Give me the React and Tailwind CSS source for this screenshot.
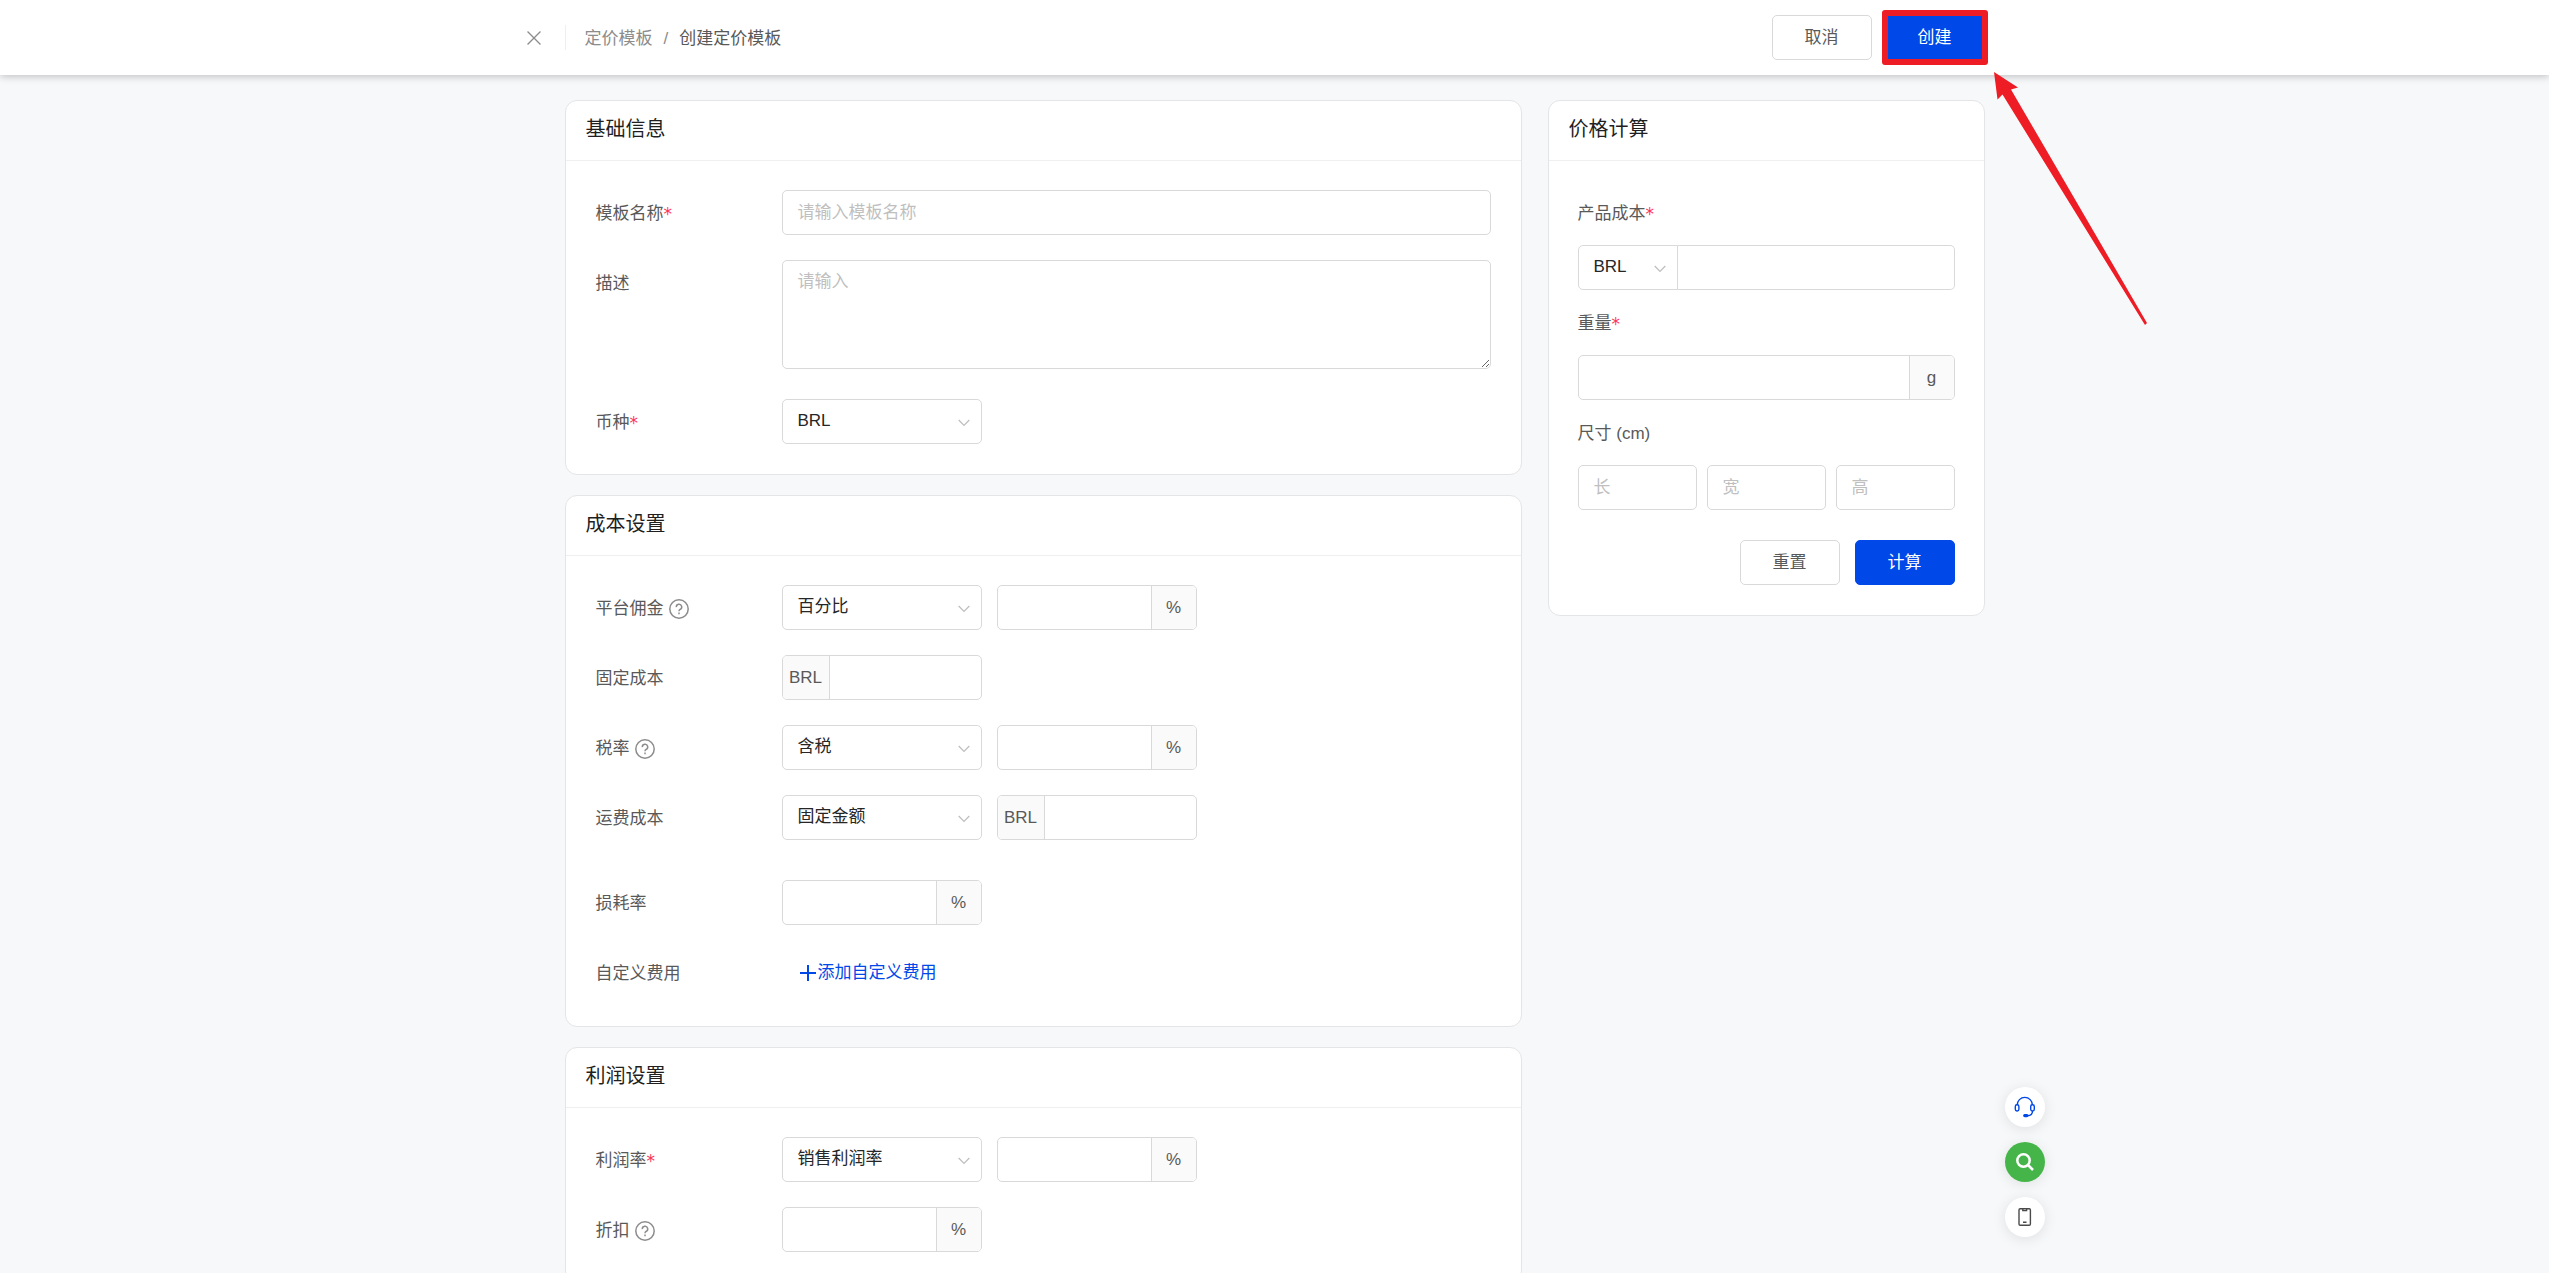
import { useState } from "react";

const inputClass =
  "h-[45px] min-w-0 rounded-[5px] border border-[#d9d9d9] bg-white px-[15px] text-[#262626] outline-none placeholder:text-[#bfbfbf]";

const labelClass = "flex h-[45px] items-center pt-0.5 text-[#595959]";

function Card({ title, children }) {
  return (
    <section className="rounded-[12px] border border-[#e4e5e7] bg-white">
      <h2 className="h-[60px] border-b border-[#efefef] px-5 pt-3 text-[20px] leading-8 text-[#1f1f1f]">{title}</h2>
      {children}
    </section>
  );
}

function Required() {
  return <span className="text-[#ff3358] font-['DejaVu_Sans','Noto_Sans_CJK_SC',sans-serif]">*</span>;
}

function HelpIcon() {
  return (
    <svg className="ml-[5px] size-5" viewBox="0 0 20 20" fill="none" stroke="#8c8c8c" strokeWidth="1.5" aria-hidden="true">
      <circle cx="10" cy="10" r="9.2" />
      <path d="M7.300 8.100a2.700 2.700 0 1 1 3.700 2.400c-.7.300-1 .700-1 1.700" />
      <path d="M10 13.600v1.700" />
    </svg>
  );
}

function Row({ label, htmlFor, required, help, children }) {
  return (
    <div className="flex items-start">
      <label htmlFor={htmlFor} className={`${labelClass} w-[186px] shrink-0`}>
        {label}
        {required && <Required />}
        {help && <HelpIcon />}
      </label>
      <div className="flex min-w-0 flex-1 gap-[15px]">{children}</div>
    </div>
  );
}

function Select({ id, label, options, className = "w-[200px] rounded-[5px]" }) {
  return (
    <div className="relative shrink-0">
      <select
        id={id}
        aria-label={label}
        className={`h-[45px] appearance-none border border-[#d9d9d9] bg-white pr-8 pb-px pl-[15px] text-[#262626] outline-none ${className}`}
      >
        {options.map((option) => (
          <option key={option}>{option}</option>
        ))}
      </select>
      <svg
        className="pointer-events-none absolute top-5 right-3 h-2 w-3"
        viewBox="0 0 12 8"
        fill="none"
        stroke="#bfbfbf"
        strokeWidth="1.3"
        aria-hidden="true"
      >
        <path d="M.7 1 6 6.4 11.3 1" />
      </svg>
    </div>
  );
}

// number box with a unit before or after it
function UnitInput({ id, label, prefix, suffix, className = "w-[200px]" }) {
  return (
    <div className={`flex h-[45px] overflow-hidden rounded-[5px] border border-[#d9d9d9] bg-white ${className}`}>
      {prefix && (
        <span className="flex w-[47px] shrink-0 items-center justify-center border-r border-[#d9d9d9] bg-[#fafafa] text-[#595959]">
          {prefix}
        </span>
      )}
      <input id={id} aria-label={label} className="min-w-0 flex-1 px-[15px] outline-none" />
      {suffix && (
        <span className="flex w-[45px] shrink-0 items-center justify-center border-l border-[#d9d9d9] bg-[#fafafa] text-[#595959]">
          {suffix}
        </span>
      )}
    </div>
  );
}

function Button({ primary, children, onClick }) {
  return (
    <button
      type="button"
      onClick={onClick}
      className={`h-[45px] w-[100px] rounded-[5px] border ${
        primary ? "border-[#0048e8] bg-[#0048e8] text-white" : "border-[#d9d9d9] bg-white text-[#595959]"
      }`}
    >
      {children}
    </button>
  );
}

function Header() {
  return (
    <header className="relative z-10 h-[75px] shrink-0 bg-white shadow-[0_1px_8px_rgba(0,0,0,0.25)]">
      <div className="relative mx-auto flex h-full max-w-[1420px] items-center">
        <button type="button" aria-label="关闭" className="absolute right-full mr-6">
          <svg className="size-[14px]" viewBox="0 0 13 13" stroke="#8c8c8c" strokeWidth="1.2" aria-hidden="true">
            <path d="M.5.5l12 12M12.5.5l-12 12" />
          </svg>
        </button>
        <nav className="flex h-[25px] items-center gap-[11px] border-l border-[#efefef] pt-0.5 pl-[19px] text-[#8c8c8c]">
          <a href="#templates">定价模板</a>
          <span>/</span>
          <span className="text-[#595959]">创建定价模板</span>
        </nav>
        <div className="ml-auto flex gap-[13px]">
          <Button>取消</Button>
          <div className="relative">
            <Button primary>创建</Button>
            <div className="pointer-events-none absolute -inset-x-[3px] -inset-y-[5px] rounded-[3px] border-6 border-[#ee1c25]" />
            <svg
              className="pointer-events-none absolute top-[57px] left-full ml-[9px] h-[254px] w-[154px]"
              viewBox="0 0 154 254"
              fill="#ee1c25"
              aria-hidden="true"
            >
              <path d="M0 0 24 15.5 17 17.5 153 251 151 253 8.5 22.5 3.5 27.500Z" />
            </svg>
          </div>
        </div>
      </div>
    </header>
  );
}

function PriceCalculator() {
  const [size, setSize] = useState({ 长: "", 宽: "", 高: "" });

  return (
    <Card title="价格计算">
      <div className="flex flex-col gap-[10px] px-[29px] pt-[29px] pb-[30px]">
        <label htmlFor="product-cost" className={labelClass}>
          产品成本
          <Required />
        </label>
        <div className="flex">
          <Select label="成本币种" options={["BRL", "USD", "CNY"]} className="w-[100px] rounded-l-[5px]" />
          <input id="product-cost" className={`${inputClass} flex-1 rounded-l-none border-l-0`} />
        </div>
        <label htmlFor="weight" className={labelClass}>
          重量
          <Required />
        </label>
        <UnitInput id="weight" suffix="g" className="w-full" />
        <label htmlFor="size-长" className={labelClass}>
          尺寸 (cm)
        </label>
        <div className="grid grid-cols-3 gap-[10px]">
          {Object.keys(size).map((side) => (
            <input
              key={side}
              id={`size-${side}`}
              aria-label={side}
              placeholder={side}
              value={size[side]}
              onChange={(e) => setSize({ ...size, [side]: e.target.value })}
              className={inputClass}
            />
          ))}
        </div>
        <div className="mt-5 flex justify-end gap-[15px]">
          <Button onClick={() => setSize({ 长: "", 宽: "", 高: "" })}>重置</Button>
          <Button primary>计算</Button>
        </div>
      </div>
    </Card>
  );
}

function FloatingTools() {
  const round = "flex size-10 items-center justify-center rounded-full shadow-[0_2px_14px_rgba(0,0,0,0.1)]";
  return (
    <div className="pointer-events-none fixed inset-x-0 bottom-9 z-10 mx-auto max-w-[1420px]">
      <div className="pointer-events-auto absolute bottom-0 left-full ml-5 flex flex-col gap-[15px]">
        <button type="button" aria-label="客服" className={`${round} bg-white`}>
          <svg className="size-6" viewBox="0 0 24 24" fill="none" stroke="#0048e8" strokeWidth="1.4" aria-hidden="true">
            <path d="M4.200 10a7.600 7.600 0 0 1 15.200 0" />
            <rect x="2.300" y="9.800" width="3.600" height="6.200" rx="1.700" />
            <rect x="17.700" y="9.800" width="3.600" height="6.200" rx="1.700" />
            <path d="M19.500 16c0 3-2 4.600-5 4.700" />
            <rect x="10.800" y="19.600" width="4" height="2" rx="1" fill="#0048e8" />
          </svg>
        </button>
        <button type="button" aria-label="搜索" className={`${round} bg-[#45b549]`}>
          <svg className="size-5" viewBox="0 0 20 20" fill="none" stroke="#fff" strokeWidth="2.500" aria-hidden="true">
            <circle cx="8.500" cy="8.500" r="6.200" />
            <path d="M13 13l5 5" />
          </svg>
        </button>
        <button type="button" aria-label="手机版" className={`${round} bg-white`}>
          <svg className="size-5" viewBox="0 0 20 20" fill="none" stroke="#4a4a4a" strokeWidth="1.400" aria-hidden="true">
            <rect x="4" y="1.700" width="11.400" height="16.600" rx="1.200" />
            <path d="M7.800 2v1.600h3.800V2M8 15.300h3.500" />
          </svg>
        </button>
      </div>
    </div>
  );
}

export default function App() {
  return (
    <div className="flex h-screen flex-col overflow-hidden bg-[#f7f8fa] font-['Liberation_Sans','Noto_Sans_CJK_SC',sans-serif] text-[17px] leading-6">
      <Header />
      <main className="flex-1 overflow-y-auto [scrollbar-width:none]">
        <div className="mx-auto flex max-w-[1420px] items-start gap-[26px] pt-[25px]">
          <div className="flex min-w-0 flex-1 flex-col gap-5">
            <Card title="基础信息">
              <div className="flex flex-col gap-[25px] px-[30px] pt-[29px] pb-[30px]">
                <Row label="模板名称" htmlFor="name" required>
                  <input id="name" placeholder="请输入模板名称" className={`${inputClass} w-full`} />
                </Row>
                <Row label="描述" htmlFor="description">
                  <textarea
                    id="description"
                    placeholder="请输入"
                    className="h-[109px] w-full resize rounded-[5px] border border-[#d9d9d9] bg-white px-[15px] py-[9px] outline-none placeholder:text-[#bfbfbf]"
                  />
                </Row>
                <div className="pt-[5px]">
                  <Row label="币种" htmlFor="currency" required>
                    <Select id="currency" options={["BRL", "USD", "CNY"]} />
                  </Row>
                </div>
              </div>
            </Card>

            <Card title="成本设置">
              <div className="flex flex-col gap-[25px] px-[30px] pt-[29px] pb-[30px]">
                <Row label="平台佣金" htmlFor="commission-type" help>
                  <Select id="commission-type" options={["百分比", "固定金额"]} />
                  <UnitInput label="平台佣金比例" suffix="%" />
                </Row>
                <Row label="固定成本" htmlFor="fixed-cost">
                  <UnitInput id="fixed-cost" prefix="BRL" />
                </Row>
                <Row label="税率" htmlFor="tax-type" help>
                  <Select id="tax-type" options={["含税", "不含税"]} />
                  <UnitInput label="税率比例" suffix="%" />
                </Row>
                <Row label="运费成本" htmlFor="shipping-type">
                  <Select id="shipping-type" options={["固定金额", "百分比"]} />
                  <UnitInput label="运费金额" prefix="BRL" />
                </Row>
                <div className="pt-[15px]">
                  <Row label="损耗率" htmlFor="loss-rate">
                    <UnitInput id="loss-rate" suffix="%" />
                  </Row>
                </div>
                <Row label="自定义费用" htmlFor="add-fee">
                  <button id="add-fee" type="button" className="flex h-[46px] items-center gap-0.5 pl-[18px] text-[#0048e8]">
                    <svg className="size-4" viewBox="0 0 16 16" stroke="currentColor" strokeWidth="2" aria-hidden="true">
                      <path d="M8 0v16M0 8h16" />
                    </svg>
                    添加自定义费用
                  </button>
                </Row>
              </div>
            </Card>

            <Card title="利润设置">
              <div className="flex flex-col gap-[25px] px-[30px] pt-[29px] pb-[30px]">
                <Row label="利润率" htmlFor="profit-type" required>
                  <Select id="profit-type" options={["销售利润率", "成本利润率"]} />
                  <UnitInput label="利润率比例" suffix="%" />
                </Row>
                <Row label="折扣" htmlFor="discount" help>
                  <UnitInput id="discount" suffix="%" />
                </Row>
              </div>
            </Card>
          </div>

          <aside className="w-[437px] shrink-0">
            <PriceCalculator />
          </aside>
        </div>
      </main>
      <FloatingTools />
    </div>
  );
}
